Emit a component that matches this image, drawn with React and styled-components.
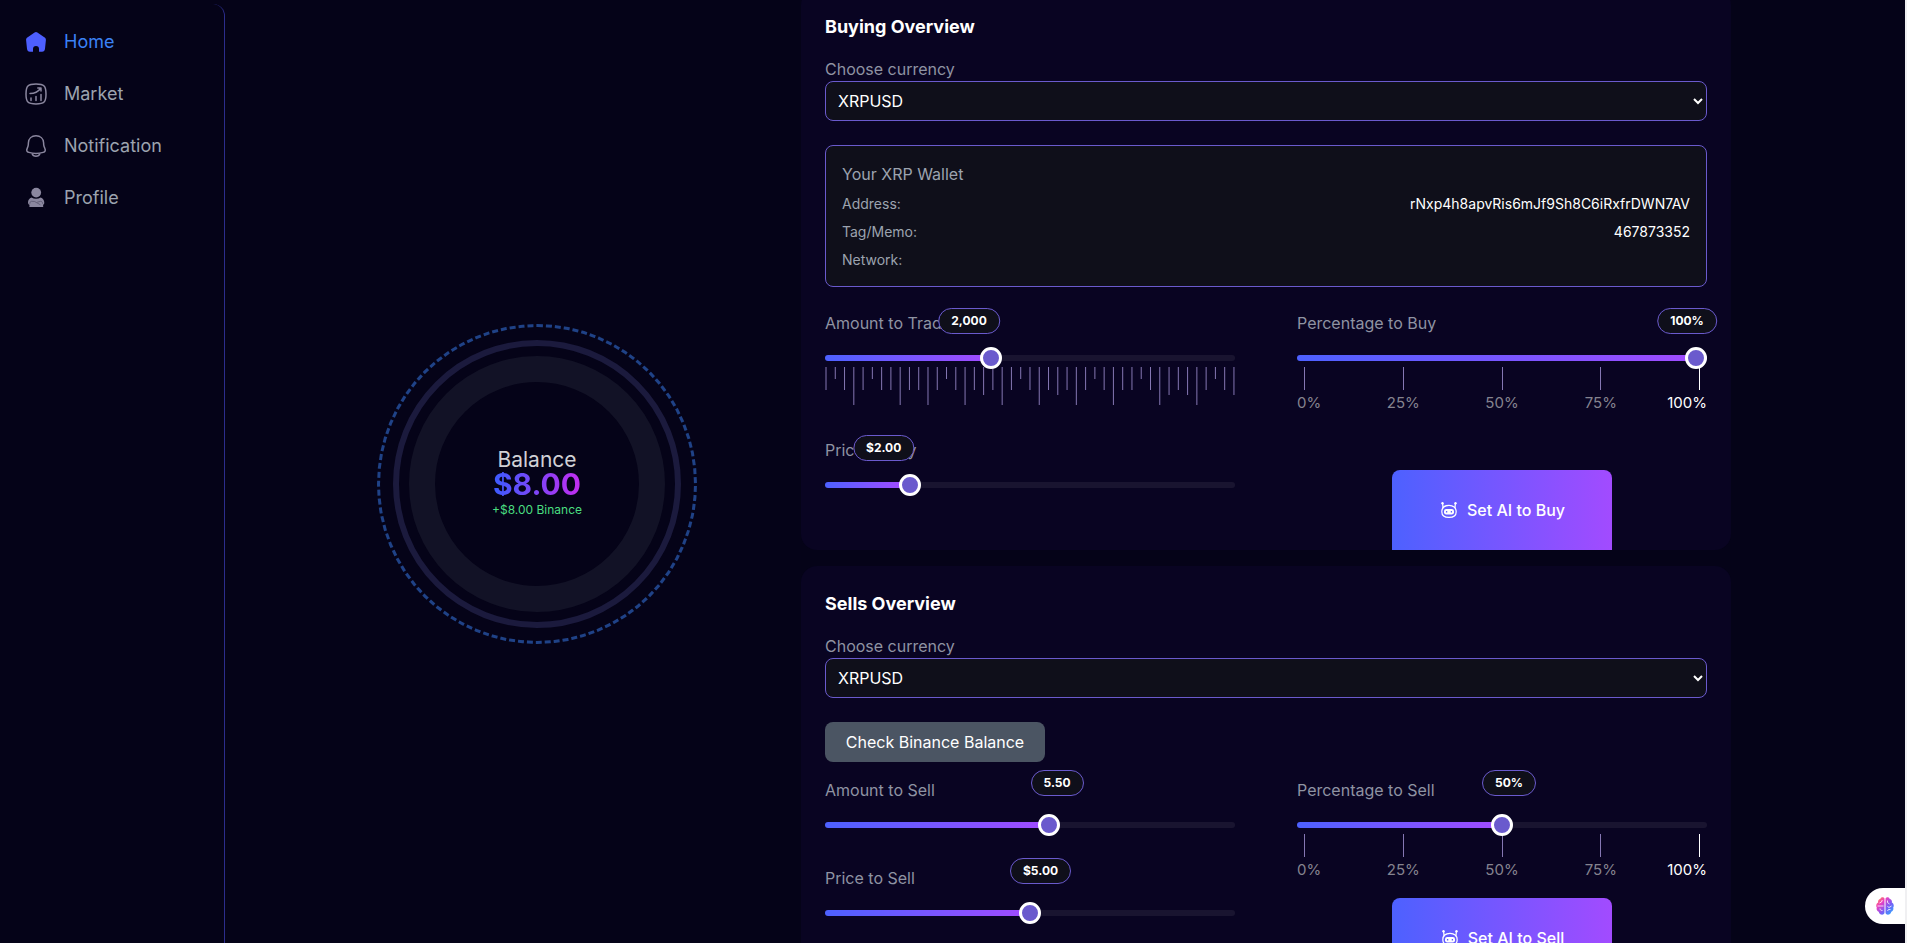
import React, { useState } from "react";
import styled, { createGlobalStyle } from "styled-components";

const RULER = "MSMTMSMMTMMTMSMTMLMTMSMTMLMTMSMTMMSMTLMLTMSML";
const TICK_HEIGHT = { S: 12, M: 23, L: 28, T: 38 };
const MARKS = [0, 25, 50, 75, 100];

const HomeIcon = () => (
  <svg width="24" height="24" viewBox="0 0 24 24" aria-hidden="true">
    <path
      fill="#4d5fff"
      d="M10.6 2.6c.9-.7 1.9-.7 2.8 0l6.9 4.7c1.2.8 1.7 1.7 1.6 3l-.9 8.5c-.2 2-1.2 3-3 3H15v-2.9a3 3 0 0 0-6 0v2.9H6c-1.8 0-2.8-1-3-3l-.9-8.5c-.1-1.3.4-2.2 1.6-3z"
    />
  </svg>
);

const MarketIcon = () => (
  <svg
    width="24"
    height="24"
    viewBox="0 0 24 24"
    fill="none"
    stroke="#8b879f"
    strokeWidth="1.5"
    strokeLinecap="round"
    strokeLinejoin="round"
    aria-hidden="true"
  >
    <path d="M2 12c0-8.2 1.8-10 10-10s10 1.8 10 10-1.8 10-10 10S2 20.2 2 12z" />
    <path d="M7 18.5v-2.5M12 18.5v-4M17 18.5v-6M6 11.5c4.5 0 8.2-1.8 10.500-5M13.800 6h3.200v3" />
  </svg>
);

const BellIcon = () => (
  <svg
    width="24"
    height="24"
    viewBox="0 0 24 24"
    fill="none"
    stroke="#8b879f"
    strokeWidth="1.5"
    strokeLinejoin="round"
    aria-hidden="true"
  >
    <path d="M12 1.8c-4.4 0-7.4 2.9-7.6 7l-.1 2c-.1 1.3-.5 2.3-1.1 3.500-1 2.100-.4 3.500 1.600 4.100 4.700 1.300 9.700 1.300 14.400 0 2-.6 2.600-2 1.600-4.100-.6-1.200-1-2.200-1.100-3.500l-.1-2c-.2-4.100-3.200-7-7.600-7z" />
    <path d="M8 19.4c.6 1.7 2 2.8 4 2.8s3.4-1.100 4-2.800" />
  </svg>
);

const ProfileIcon = () => (
  <svg width="24" height="24" viewBox="0 0 24 24" aria-hidden="true">
    <circle cx="12.2" cy="6.6" r="4.9" fill="#8b879f" />
    <path
      fill="#8b879f"
      d="M7.5 11.500c2.600 1.600 6.400 1.600 9.200 0 2.200.8 3.600 2.800 3.600 5.200 0 1-.4 1.700-1.200 2.100l.1 2.200H5.400l.1-2.200c-.9-.4-1.500-1.200-1.500-2.300 0-2.300 1.300-4.200 3.500-5z"
    />
    <path
      fill="none"
      stroke="#4a465f"
      strokeWidth=".6"
      d="M5.800 17.800c0-1.600.6-2.400 1.800-2.500l3 .2 5.800 3.300M18.600 17.800c0-1.600-.8-2.500-2-2.500l-3.400.9"
    />
  </svg>
);

const RobotIcon = () => (
  <svg
    width="20"
    height="20"
    viewBox="0 0 20 20"
    fill="none"
    stroke="#fff"
    strokeWidth="1.2"
    aria-hidden="true"
  >
    <path d="M10 5.400c-4.200 0-7.200 2.300-7.200 6.300 0 4 2.700 5.700 7.200 5.700s7.200-1.700 7.200-5.700c0-4-3-6.300-7.200-6.300z" />
    <path d="M3.600 3.400l.5 5M16.400 3.400l-.5 5" />
    <circle cx="3.500" cy="3.300" r="1.200" fill="#fff" stroke="none" />
    <circle cx="16.500" cy="3.300" r="1.200" fill="#fff" stroke="none" />
    <rect x="5" y="9" width="10" height="5.400" rx="2.200" fill="#fff" stroke="none" />
    <path stroke="#5f5dff" strokeWidth="1.300" d="M7.600 11v1.500M12.400 11v1.500" />
  </svg>
);

const BrainIcon = () => (
  <svg width="18" height="18" viewBox="0 0 18 18" aria-hidden="true">
    <defs>
      <linearGradient id="brain" x1="0" y1="0" x2="1" y2="1">
        <stop offset="0" stopColor="#ff9a2e" />
        <stop offset=".3" stopColor="#ee3fc0" />
        <stop offset=".6" stopColor="#7a5cf5" />
        <stop offset="1" stopColor="#22b4ff" />
      </linearGradient>
    </defs>
    <path
      fill="url(#brain)"
      d="M8.500 1.500C7.600-.2 4.800 0 4.300 2 2.500 2.200 1.700 4 2.200 5.500.2 6.500-.3 9 .8 10.500c-.6 2 .2 3.600 1.900 4.200C3.300 17.800 7.500 18.800 8.500 16zM9.500 1.500c.9-1.700 3.700-1.500 4.200.5 1.800.2 2.600 2 2.100 3.500 2 1 2.500 3.500 1.400 5 .6 2-.2 3.600-1.900 4.200-.6 3.100-4.800 4.100-5.800 1.300z"
    />
    <path
      fill="none"
      stroke="#fff"
      strokeWidth=".8"
      d="M1.500 9h6M3.500 6l2-1 .8-2M4 11.500c0 1.500 1 2 2.500 2M11.500 3.500v2l2 1.500M11.500 9.500l1.500 1 2.500-1.500M11.500 14l1-1.500h2"
    />
  </svg>
);

const NAV = [
  { label: "Home", icon: <HomeIcon />, active: true },
  { label: "Market", icon: <MarketIcon /> },
  { label: "Notification", icon: <BellIcon /> },
  { label: "Profile", icon: <ProfileIcon /> },
];

function SliderField({ id, label, min = 0, max, step = 1, initial, format, raised, children }) {
  const [value, setValue] = useState(initial);
  const percent = ((value - min) / (max - min)) * 100;

  return (
    <Field>
      <Label htmlFor={id}>{label}</Label>
      <Bubble $raised={raised} style={{ left: `calc(${percent}% - 20px)` }}>
        {format(value)}
      </Bubble>
      <Range
        id={id}
        type="range"
        min={min}
        max={max}
        step={step}
        value={value}
        onChange={(e) => setValue(Number(e.target.value))}
        style={{ backgroundSize: `${percent}% 100%` }}
      />
      {children}
    </Field>
  );
}

const Ruler = () => (
  <RulerSvg aria-hidden="true">
    <svg x="1" overflow="visible">
      {RULER.split("").map((size, i) => (
        <line
          key={i}
          x1={`${(i / (RULER.length - 1)) * 99.5}%`}
          x2={`${(i / (RULER.length - 1)) * 99.5}%`}
          y1="0"
          y2={TICK_HEIGHT[size]}
        />
      ))}
    </svg>
  </RulerSvg>
);

const PercentMarks = () => (
  <Marks>
    {MARKS.map((mark) => (
      <Mark key={mark} $full={mark === 100}>
        <span>{mark}%</span>
      </Mark>
    ))}
  </Marks>
);

function CurrencySelect({ id }) {
  return (
    <>
      <Label htmlFor={id}>Choose currency</Label>
      <Select id={id} defaultValue="XRPUSD">
        <option>XRPUSD</option>
        <option>BTCUSD</option>
        <option>ETHUSD</option>
      </Select>
    </>
  );
}

const dollars = (v) => `$${v.toFixed(2)}`;

function App() {
  return (
    <Page>
      <GlobalStyle />
      <Sidebar>
        {NAV.map((item) => (
          <NavLink href="#" key={item.label} $active={item.active}>
            {item.icon}
            {item.label}
          </NavLink>
        ))}
      </Sidebar>

      <Main>
        <BalanceArea>
          <DashedRing>
            <ThinRing>
              <ThickRing>
                <BalanceLabel>Balance</BalanceLabel>
                <BalanceAmount>$8.00</BalanceAmount>
                <BalanceNote>+$8.00 Binance</BalanceNote>
              </ThickRing>
            </ThinRing>
          </DashedRing>
        </BalanceArea>

        <Panels>
          <Card>
            <Title>Buying Overview</Title>
            <CurrencySelect id="buy-currency" />

            <Wallet>
              <WalletTitle>Your XRP Wallet</WalletTitle>
              <WalletRow>
                <dt>Address:</dt>
                <dd>rNxp4h8apvRis6mJf9Sh8C6iRxfrDWN7AV</dd>
              </WalletRow>
              <WalletRow>
                <dt>Tag/Memo:</dt>
                <dd>467873352</dd>
              </WalletRow>
              <WalletRow>
                <dt>Network:</dt>
                <dd />
              </WalletRow>
            </Wallet>

            <Columns>
              <Column $gap={33}>
                <SliderField
                  id="buy-amount"
                  label="Amount to Trade"
                  max={5000}
                  initial={2000}
                  format={(v) => v.toLocaleString("en-US")}
                >
                  <Ruler />
                </SliderField>
                <SliderField
                  id="buy-price"
                  label="Price to Buy"
                  min={0.1}
                  max={10}
                  step={0.1}
                  initial={2}
                  format={dollars}
                />
              </Column>
              <Column $gap={55}>
                <SliderField
                  id="buy-percent"
                  label="Percentage to Buy"
                  max={100}
                  initial={100}
                  format={(v) => `${v}%`}
                >
                  <PercentMarks />
                </SliderField>
                <AiButton type="button">
                  <RobotIcon />
                  Set AI to Buy
                </AiButton>
              </Column>
            </Columns>
          </Card>

          <Card>
            <Title>Sells Overview</Title>
            <CurrencySelect id="sell-currency" />
            <CheckButton type="button">Check Binance Balance</CheckButton>

            <Columns $tight>
              <Column $gap={38}>
                <SliderField
                  id="sell-amount"
                  label="Amount to Sell"
                  max={10}
                  step={0.1}
                  initial={5.5}
                  format={(v) => v.toFixed(2)}
                  raised
                />
                <SliderField
                  id="sell-price"
                  label="Price to Sell"
                  max={10}
                  step={0.1}
                  initial={5}
                  format={dollars}
                  raised
                />
              </Column>
              <Column $gap={16}>
                <SliderField
                  id="sell-percent"
                  label="Percentage to Sell"
                  max={100}
                  initial={50}
                  format={(v) => `${v}%`}
                  raised
                >
                  <PercentMarks />
                </SliderField>
                <AiButton type="button">
                  <RobotIcon />
                  Set AI to Sell
                </AiButton>
              </Column>
            </Columns>
          </Card>
        </Panels>
      </Main>

      <AssistantButton type="button" aria-label="Assistant">
        <BrainIcon />
      </AssistantButton>
    </Page>
  );
}

export default App;

const GlobalStyle = createGlobalStyle`
  * {
    box-sizing: border-box;
    margin: 0;
    padding: 0;
  }

  body {
    background: #050318;
    color: #fff;
    font-family: Inter, "Liberation Sans", sans-serif;
    font-size: 16px;
    line-height: 24px;
  }

  button,
  input,
  select {
    font: inherit;
    color: inherit;
  }
`;

const Page = styled.div`
  position: relative;
  display: flex;
  height: 100vh;
  overflow: hidden;
  border-right: 2px solid #f0f0f2;
`;

const Sidebar = styled.nav`
  flex: none;
  width: 225px;
  margin-top: 4px;
  padding: 12px 0;
  border-right: 1px solid #2c2d8c;
  border-top-right-radius: 12px;
`;

const NavLink = styled.a`
  display: flex;
  align-items: center;
  gap: 16px;
  padding: 12px 24px;
  font-size: 18px;
  line-height: 28px;
  text-decoration: none;
  color: ${(props) => (props.$active ? "#3b82f6" : "#9ca3af")};
`;

const Main = styled.main`
  flex: 1;
  min-width: 0;
  display: grid;
  grid-template-columns: 528px 1fr;
  padding: 0 174px 0 48px;
`;

const BalanceArea = styled.section`
  display: flex;
  align-items: center;
  justify-content: center;
  height: 100vh;
  padding-top: 24px;
`;

const Ring = styled.div`
  display: flex;
  flex-direction: column;
  align-items: center;
  justify-content: center;
  border-radius: 50%;
`;

const DashedRing = styled(Ring)`
  width: 320px;
  height: 320px;
  border: 3px dashed rgba(59, 130, 246, 0.5);
`;

const ThinRing = styled(Ring)`
  width: 288px;
  height: 288px;
  border: 6px solid #1b1a3d;
`;

const ThickRing = styled(Ring)`
  width: 256px;
  height: 256px;
  border: 26px solid #121226;
`;

const BalanceLabel = styled.p`
  font-size: 21px;
  line-height: 24px;
  color: #d1d1d6;
`;

const BalanceAmount = styled.p`
  font-size: 30px;
  font-weight: 700;
  line-height: 24px;
  background: linear-gradient(90deg, #3b5bff, #c42df0);
  background-clip: text;
  color: transparent;
`;

const BalanceNote = styled.p`
  padding: 6px 0 2px;
  font-size: 12px;
  line-height: 16px;
  color: #4ade80;
`;

const Panels = styled.div`
  display: flex;
  flex-direction: column;
  gap: 16px;
  margin-top: -11px;
`;

const Card = styled.section`
  display: flex;
  flex-direction: column;
  padding: 24px 24px 0;
  border-radius: 16px;
  background: #090422;
`;

const Title = styled.h2`
  margin-bottom: 16px;
  font-size: 18px;
  font-weight: 700;
  line-height: 28px;
`;

const Label = styled.label`
  display: block;
  color: #8f93a3;
`;

const Select = styled.select`
  width: 100%;
  height: 40px;
  padding: 0 8px;
  border: 1px solid #6a5acd;
  border-radius: 8px;
  background: #0f0f1a;
`;

const Wallet = styled.dl`
  display: flex;
  flex-direction: column;
  gap: 8px;
  margin-top: 24px;
  padding: 16px;
  border: 1px solid #6a5acd;
  border-radius: 8px;
  background: #0f0f1a;
`;

const WalletTitle = styled.h3`
  font-size: 16px;
  font-weight: 400;
  color: #9ca3af;
`;

const WalletRow = styled.div`
  display: flex;
  justify-content: space-between;
  font-size: 14px;
  line-height: 20px;

  dt {
    color: #9ca3af;
  }
`;

const Columns = styled.div`
  display: grid;
  grid-template-columns: 1fr 1fr;
  gap: 62px;
  margin-top: ${(props) => (props.$tight ? 16 : 24)}px;
`;

const Column = styled.div`
  display: flex;
  flex-direction: column;
  gap: ${(props) => props.$gap}px;
`;

const Field = styled.div`
  position: relative;
`;

const Bubble = styled.output`
  position: absolute;
  top: ${(props) => (props.$raised ? -8 : -3)}px;
  transform: ${(props) => (props.$raised ? "none" : "translateX(-50%)")};
  padding: 4px 12px;
  border: 1px solid #6a5acd;
  border-radius: 13px;
  background: #0f0f1a;
  font-size: 12px;
  font-weight: 700;
  line-height: 16px;
`;

const Range = styled.input`
  appearance: none;
  display: block;
  width: 100%;
  height: 6px;
  margin-top: 20px;
  border-radius: 4px;
  background: #191430 linear-gradient(90deg, #4d61ff, #a24bff) no-repeat;
  cursor: pointer;

  &::-webkit-slider-thumb {
    appearance: none;
    position: relative;
    width: 22px;
    height: 22px;
    border: 3px solid #fff;
    border-radius: 50%;
    background: #6a5acd;
  }
`;

const RulerSvg = styled.svg`
  display: block;
  width: 100%;
  height: 38px;
  margin-top: 6px;
  stroke: #8577b3;
`;

const Marks = styled.div`
  display: flex;
  justify-content: space-between;
  margin-top: 6px;
`;

const Mark = styled.div`
  display: flex;
  flex-direction: column;
  align-items: center;
  gap: 1px;
  width: 15px;
  white-space: nowrap;
  font-size: 15px;
  color: ${(props) => (props.$full ? "#fff" : "#85838f")};

  &::before {
    content: "";
    width: 1px;
    height: 23px;
    background: ${(props) => (props.$full ? "#fff" : "#8577b3")};
  }

  &:first-child span {
    align-self: flex-start;
  }

  &:last-child span {
    align-self: flex-end;
  }
`;

const AiButton = styled.button`
  display: flex;
  align-items: center;
  justify-content: center;
  gap: 8px;
  align-self: center;
  width: 220px;
  height: 80px;
  border: none;
  border-radius: 8px 8px 0 0;
  background: linear-gradient(90deg, #4d61ff, #a24bff);
  font-weight: 500;
  cursor: pointer;
`;

const CheckButton = styled.button`
  align-self: flex-start;
  width: 220px;
  height: 40px;
  margin-top: 24px;
  border: none;
  border-radius: 8px;
  background: #4b5563;
  cursor: pointer;
`;

const AssistantButton = styled.button`
  position: absolute;
  right: 0;
  bottom: 19px;
  display: flex;
  align-items: center;
  width: 40px;
  height: 36px;
  padding-left: 11px;
  border: none;
  border-radius: 18px 0 0 18px;
  background: #fff;
  cursor: pointer;
`;
